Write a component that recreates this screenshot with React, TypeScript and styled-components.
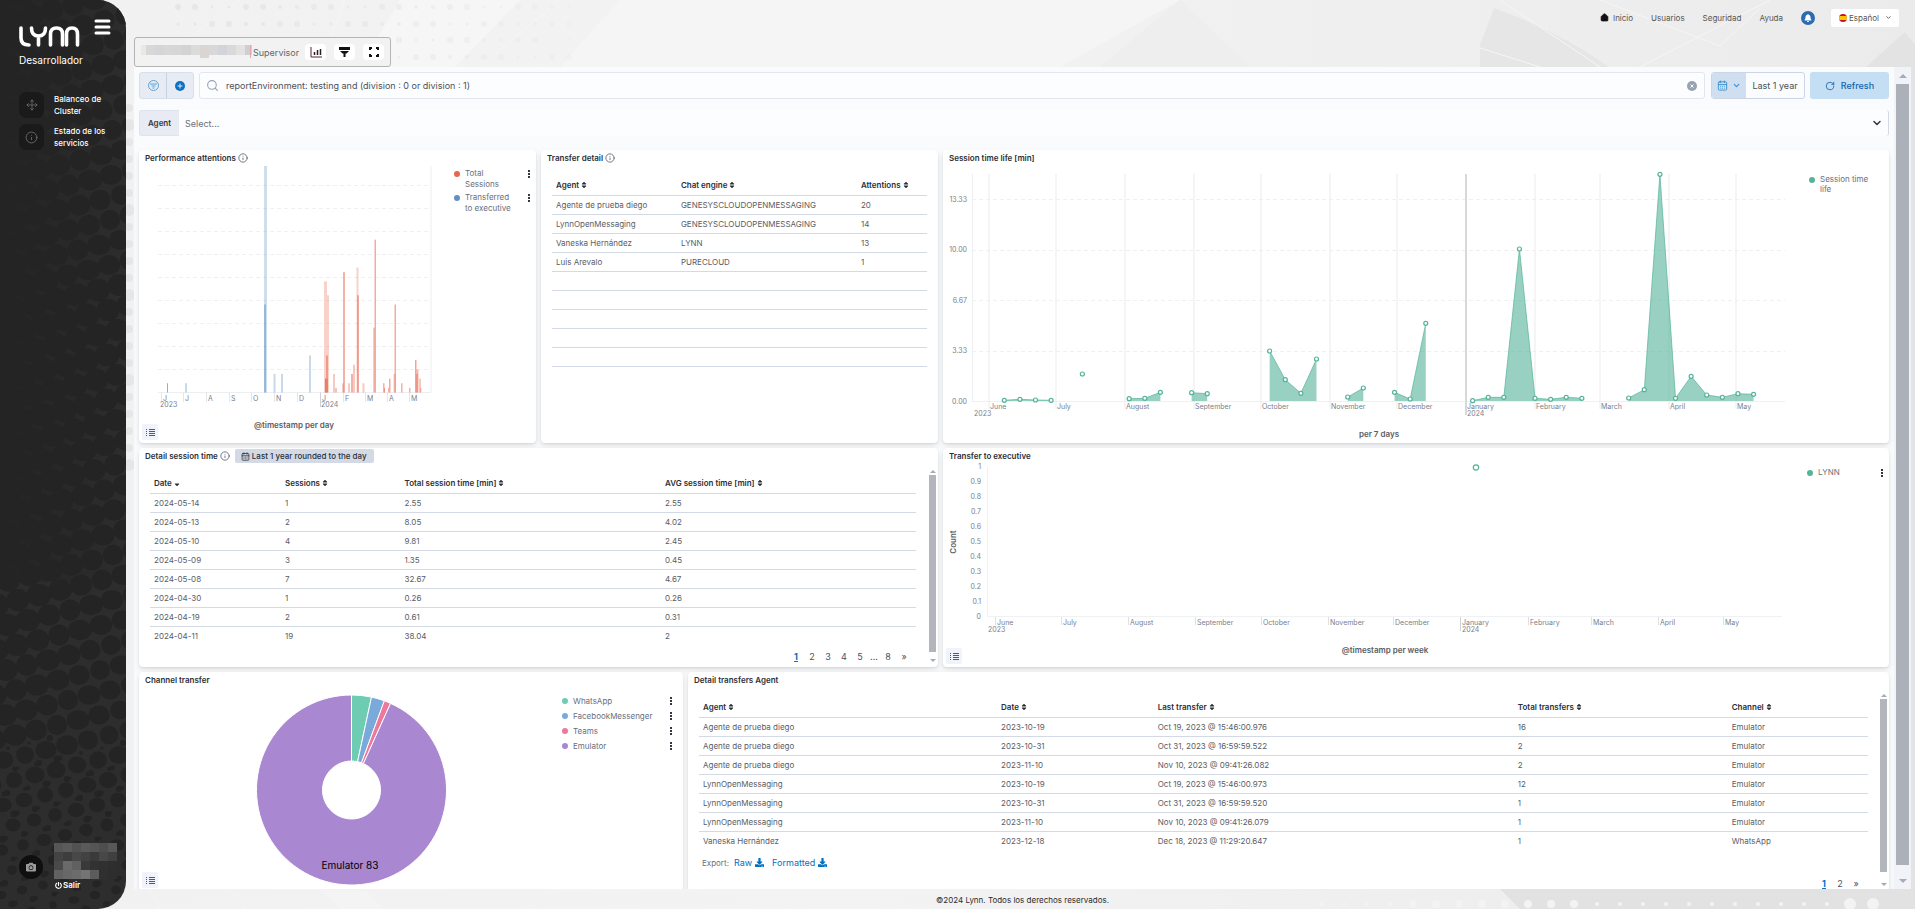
import React from "react";
import styled, { createGlobalStyle } from "styled-components";
import { Info, Move, ChevronDown, Search, RotateCw, CalendarDays, House } from "lucide-react";
import { FaSort, FaSortDown, FaDownload, FaCamera, FaPowerOff, FaBell } from "react-icons/fa";

const GlobalStyle = createGlobalStyle`
  * { box-sizing: border-box; }
  body { margin: 0; background: #efefef; font-family: Inter, "Liberation Sans", sans-serif; color: #343741; }
  button, input, select { font-family: inherit; color: inherit; margin: 0; padding: 0; border: 0; background: none; }
  button, select { cursor: pointer; }
  a { color: inherit; text-decoration: none; }
`;

/* ---------- page frame ---------- */

const Shell = styled.div`
  position: relative;
  display: flex;
  height: 100vh;
  overflow: hidden;
`;

const Backdrop = styled.svg`
  position: absolute;
  inset: 0;
  width: 100%;
  height: 100%;
`;

const Main = styled.div`
  position: relative;
  flex: 1;
  min-width: 0;
  display: flex;
  flex-direction: column;
  padding: 0 4px 0 8px;
`;

const Footer = styled.footer`
  height: 20px;
  line-height: 22px;
  text-align: center;
  font-size: 8px;
  color: #2b2b2b;
`;

/* ---------- sidebar ---------- */

const Sidebar = styled.aside`
  position: relative;
  flex: none;
  width: 126px;
  display: flex;
  flex-direction: column;
  overflow: hidden;
  background: #2d2d2d;
  border-radius: 0 28px 28px 0;
  color: #fff;
`;

const SidebarTop = styled.div`
  position: relative;
  display: flex;
  justify-content: space-between;
  padding: 18px 15px 0 19px;
`;

const LogoMark = styled.svg`
  margin-top: 7px;
`;

const MenuToggle = styled.button`
  display: flex;
  align-items: flex-start;
`;

const Role = styled.div`
  position: relative;
  padding: 5px 0 0 19px;
  font-size: 10px;
  line-height: 14px;
`;

const SideNav = styled.nav`
  position: relative;
  display: flex;
  flex-direction: column;
  gap: 6px;
  padding: 25px 6px 0 19px;
`;

const SideLink = styled.a`
  display: flex;
  align-items: center;
  gap: 10px;
  font-size: 8px;
  line-height: 12px;
  font-weight: 500;
`;

const SideIcon = styled.span`
  flex: none;
  width: 25px;
  height: 26px;
  display: grid;
  place-items: center;
  border-radius: 7px;
  background: #1a1a1a;
  color: #767676;
`;

const UserCard = styled.div`
  position: relative;
  display: flex;
  gap: 11px;
  margin-top: auto;
  padding: 0 8px 18px 19px;
`;

const Avatar = styled.button`
  flex: none;
  width: 24px;
  height: 24px;
  margin-top: 12px;
  display: grid;
  place-items: center;
  border-radius: 50%;
  background: #0f0f0f;
  color: #9a9a9a;
`;

const Logout = styled.a`
  display: flex;
  align-items: center;
  gap: 1px;
  padding-left: 1px;
  font-size: 8px;
  line-height: 12px;
  font-weight: 600;
`;

/* ---------- header ---------- */

const TopNav = styled.nav`
  display: flex;
  justify-content: flex-end;
  align-items: center;
  height: 37px;
  padding: 0 12px 2px 0;
  font-size: 8px;
  color: #555;
`;

const NavLink = styled.a`
  display: flex;
  align-items: center;
  gap: 4px;
  margin-right: 18px;
`;

const Bell = styled.button`
  width: 14px;
  height: 14px;
  margin-right: 16px;
  display: grid;
  place-items: center;
  border-radius: 50%;
  background: #2d6bb0;
  color: #fff;
`;

const Language = styled.label`
  display: flex;
  align-items: center;
  gap: 2px;
  height: 18px;
  padding: 0 7px 0 8px;
  border-radius: 2px;
  background: #fff;
`;

const LanguageSelect = styled.select`
  appearance: none;
  font-size: 8px;
  width: 34px;
`;

const RoleBar = styled.div`
  align-self: flex-start;
  display: flex;
  align-items: center;
  height: 30px;
  padding: 0 6px;
  border: 1px solid #b3b3b3;
  border-radius: 3px;
  background: #f2f2f2;
  font-size: 9px;
  color: #666;
`;

const RoleName = styled.span`
  margin: 0 6px 0 1px;
`;

const ToolGroup = styled.div`
  display: flex;
  gap: 8px;
`;

const ToolButton = styled.button`
  width: 21px;
  height: 16px;
  display: grid;
  place-items: center;
  border-radius: 4px;
  background: #fff;
`;

/* ---------- dashboard ---------- */

const Frame = styled.main`
  flex: 1;
  min-height: 0;
  display: flex;
  background: #fafbfd;
  overflow: hidden;
`;

const Dashboard = styled.div`
  flex: 1;
  min-width: 0;
  padding: 5px;
`;

const QueryBar = styled.form`
  display: flex;
  gap: 5px;
  height: 27px;
`;

const FilterGroup = styled.div`
  display: flex;
  border: 1px solid #d9dfea;
  border-radius: 3px;
  background: #e7ebf3;
  overflow: hidden;
`;

const FilterButton = styled.button`
  width: 26px;
  display: grid;
  place-items: center;
  & + & { width: 27px; border-left: 1px solid #c7d1e2; }
`;

const QueryBox = styled.label`
  flex: 1;
  display: flex;
  align-items: center;
  gap: 7px;
  padding: 0 6px;
  border: 1px solid #e3e6ef;
  border-radius: 3px;
  background: #fcfdfe;
  color: #98a2b3;
`;

const QueryInput = styled.input`
  flex: 1;
  min-width: 0;
  outline: none;
  font-size: 9px;
  color: #4c505a;
`;

const ClearButton = styled.button`
  width: 10px;
  height: 10px;
  margin-right: 1px;
  display: grid;
  place-items: center;
  border-radius: 50%;
  background: #98a2b3;
`;

const DateGroup = styled.div`
  display: flex;
  width: 94px;
  margin-left: 1px;
  border: 1px solid #ccd4e6;
  border-radius: 3px;
  overflow: hidden;
  background: #fbfcfd;
`;

const DateQuick = styled.button`
  width: 34px;
  display: flex;
  align-items: center;
  justify-content: center;
  gap: 4px;
  background: #cfdff0;
  color: #3b8fd0;
`;

const DateRange = styled.button`
  flex: 1;
  font-size: 9px;
  color: #4c505a;
`;

const RefreshButton = styled.button`
  width: 79px;
  display: flex;
  align-items: center;
  justify-content: center;
  gap: 6px;
  border-radius: 3px;
  background: #c4dff3;
  color: #1464ab;
  font-size: 9px;
  font-weight: 500;
`;

const AgentControl = styled.label`
  position: relative;
  display: flex;
  height: 26px;
  margin: 11px 0 14px;
  border-right: 1px solid #d3dae6;
  border-radius: 3px;
  background: #fcfdfe;
`;

const AgentLabel = styled.span`
  display: flex;
  align-items: center;
  width: 40px;
  justify-content: center;
  border: 1px solid #dfe3ed;
  border-right: 0;
  border-radius: 3px 0 0 3px;
  background: #e8ebf3;
  font-size: 8px;
  font-weight: 600;
`;

const AgentSelect = styled.select`
  flex: 1;
  appearance: none;
  outline: none;
  padding: 0 6px;
  font-size: 9px;
  color: #69707d;
`;

const SelectArrow = styled.span`
  position: absolute;
  right: 5px;
  top: 7px;
  line-height: 0;
  pointer-events: none;
`;

const PanelRow = styled.div<{ $columns: string; $height: number }>`
  display: grid;
  grid-template-columns: ${(p) => p.$columns};
  grid-template-rows: ${(p) => p.$height}px;
  gap: 5px;
  margin-bottom: 5px;
`;

const PanelBox = styled.section`
  position: relative;
  display: flex;
  flex-direction: column;
  min-width: 0;
  background: #fff;
  border-radius: 4px;
  box-shadow: 0 1px 2px rgba(0, 0, 0, 0.07), 0 2px 4px rgba(0, 0, 0, 0.05), 0 4px 10px rgba(0, 0, 0, 0.06);
`;

const PanelTitle = styled.h2`
  display: flex;
  align-items: center;
  gap: 2px;
  height: 16px;
  margin: 0;
  padding-left: 6px;
  font-size: 8px;
  font-weight: 600;
  color: #2c2f37;
`;

const TimeBadge = styled.span`
  display: flex;
  align-items: center;
  gap: 2px;
  height: 14px;
  margin-left: 3px;
  padding: 0 7px 0 6px;
  border-radius: 2px;
  background: #d3dae6;
  font-weight: 500;
`;

const PanelBody = styled.div`
  flex: 1;
  min-height: 0;
  display: flex;
`;

const ChartArea = styled.svg`
  flex: 1;
  min-width: 0;
  height: 100%;
  overflow: visible;
  font-size: 7px;
  fill: #7a808c;
`;

const Legend = styled.ul<{ $width: number; $top: number; $line: number; $right?: number }>`
  flex: none;
  width: ${(p) => p.$width}px;
  margin: 0;
  padding: ${(p) => p.$top}px ${(p) => p.$right ?? 6}px 0 0;
  list-style: none;
  display: flex;
  flex-direction: column;
  gap: 2px;
  font-size: 8px;
  line-height: ${(p) => p.$line}px;
  color: #69707d;
`;

const LegendItem = styled.li`
  display: flex;
  gap: 5px;
`;

const LegendDot = styled.span<{ $color: string }>`
  flex: none;
  width: 6px;
  height: 6px;
  margin-top: 3px;
  border-radius: 50%;
  background: ${(p) => p.$color};
`;

const LegendText = styled.span<{ $width: number }>`
  width: ${(p) => p.$width}px;
`;

const DotsButton = styled.button`
  align-self: flex-start;
  margin: 2px 0 0 auto;
  line-height: 0;
`;

const ListButton = styled.button`
  position: absolute;
  left: 3px;
  bottom: 3px;
  width: 16px;
  height: 16px;
  display: grid;
  place-items: center;
  border-radius: 2px;
  background: #f0f3fb;
`;

const TableArea = styled.div<{ $left: number; $right: number; $top: number }>`
  flex: 1;
  min-width: 0;
  display: flex;
  flex-direction: column;
  padding: ${(p) => p.$top}px ${(p) => p.$right}px 0 ${(p) => p.$left}px;
`;

const DataTable = styled.table`
  width: 100%;
  table-layout: fixed;
  border-collapse: collapse;
  font-size: 8px;
  line-height: 10px;
`;

const HeadCell = styled.th`
  height: 19px;
  padding: 0 4px;
  text-align: left;
  white-space: nowrap;
  border-bottom: 1px solid #d3dae6;
`;

const Cell = styled.td<{ $open?: boolean }>`
  height: 19px;
  padding: 0 4px;
  white-space: nowrap;
  color: #5a5d66;
  border-bottom: 1px solid ${(p) => (p.$open ? "transparent" : "#d3dae6")};
`;

const SortButton = styled.button`
  display: inline-flex;
  align-items: center;
  gap: 1px;
  font-size: 8px;
  font-weight: 600;
  color: #2c2f37;
`;

const Pager = styled.nav<{ $top: number }>`
  flex: none;
  display: flex;
  justify-content: flex-end;
  align-items: center;
  height: 21px;
  margin-top: ${(p) => p.$top}px;
  padding-right: 4px;
  font-size: 9px;
  color: #4c505a;
`;

const PageButton = styled.button<{ $current?: boolean }>`
  width: 16px;
  font-size: 9px;
  text-align: center;
  ${(p) => p.$current && "color: #0071c2; font-weight: 700; text-decoration: underline;"}
`;

const PageGap = styled.span`
  width: 12px;
  text-align: center;
`;

const ExportRow = styled.div`
  flex: none;
  display: flex;
  align-items: center;
  gap: 5px;
  height: 18px;
  margin-top: 3px;
  padding-left: 3px;
  font-size: 8px;
  color: #69707d;
`;

const ExportLink = styled.a`
  display: flex;
  align-items: center;
  gap: 3px;
  margin-right: 3px;
  font-size: 9px;
  color: #0071c2;
`;

const Scroller = styled.div<{ $width: number; $margin: string }>`
  flex: none;
  width: ${(p) => p.$width}px;
  margin: ${(p) => p.$margin};
  display: flex;
  flex-direction: column;
  align-items: center;
`;

const PageTrack = styled(Scroller)`
  background: #f2f3f8;
`;

const Thumb = styled.div<{ $color: string; $bottom: number; $inset: number }>`
  flex: 1;
  align-self: stretch;
  margin: 0 ${(p) => p.$inset}px ${(p) => p.$bottom}px;
  background: ${(p) => p.$color};
`;

const Arrow = styled.span<{ $up?: boolean; $size: number; $box: number }>`
  height: ${(p) => p.$box}px;
  display: flex;
  align-items: center;
  &::before {
    content: "";
    border: ${(p) => p.$size}px solid transparent;
    border-${(p) => (p.$up ? "bottom" : "top")}-color: #a6abb5;
    border-${(p) => (p.$up ? "top" : "bottom")}-width: 0;
  }
`;

/* ---------- decorative drawings ---------- */

function SidebarTexture() {
  const dots: React.ReactNode[] = [];
  for (let i = -6; i < 14; i++) {
    for (let j = -2; j < 52; j++) {
      const x = i * 21 + j * 10 - Math.floor(j / 2) * 21;
      const y = -i * 5 + j * 20 + Math.floor(j / 2) * 5;
      if (x < -16 || x > 140 || y < -16 || y > 925) continue;
      const wobble = (Math.abs(i * 7 + j * 3) % 4) * 0.5;
      if (y < 750) {
        const r = y < 280 ? 11.4 - (x / 126) * 1.6 : 12.6 - (x / 126) * 1.6 - (Math.max(0, y - 380) / 370) * 2;
        dots.push(<ellipse key={`${i}/${j}`} cx={x} cy={y} rx={r + wobble} ry={r} />);
      } else {
        const r = 9 - ((y - 750) / 160) * 5.5;
        dots.push(<ellipse key={`${i}/${j}`} cx={x} cy={y} rx={r + wobble} ry={r} />);
        dots.push(<circle key={`${i}-${j}`} cx={x + 11} cy={y + 9} r={2 + wobble} />);
        dots.push(<circle key={`${i}_${j}`} cx={x + 4} cy={y - 12} r={1.5 + wobble} />);
      }
    }
  }
  return (
    <Backdrop aria-hidden="true">
      <defs>
        <linearGradient id="shade" x1="0" x2="1">
          <stop offset="0" stopColor="#242424" stopOpacity="1" />
          <stop offset="1" stopColor="#242424" stopOpacity="0" />
        </linearGradient>
      </defs>
      <g fill="#242424">{dots}</g>
      <rect width="100%" height="64%" fill="url(#shade)" />
    </Backdrop>
  );
}

function PageTexture() {
  const dots: React.ReactNode[] = [];
  const sizes = [3, 3, 1.5, 1.5, 3, 3, 2, 2];
  for (let k = 0; k < 24; k++) {
    const x = 178 + k * 17;
    [7, 24, 40, 57].forEach((y, r) => {
      if (r > 1 && x < 394) return;
      dots.push(<circle key={`${k}-${r}`} cx={x} cy={y} r={sizes[(k + r * 2) % 8]} opacity={1 - k / 30} />);
    });
  }
  for (let k = 0; k < 22; k++) dots.push(<circle key={`l${k}`} cx="129" cy={108 + k * 17} r={k % 5 === 1 ? 6 : 4} />);
  return (
    <Backdrop aria-hidden="true" viewBox="0 0 1915 909" preserveAspectRatio="xMidYMid slice">
      <defs>
        <linearGradient id="page" x1="0" x2="1">
          <stop offset="0" stopColor="#f1f1f1" />
          <stop offset="0.45" stopColor="#f3f3f3" />
          <stop offset="1" stopColor="#ebebeb" />
        </linearGradient>
      </defs>
      <rect width="1915" height="909" fill="url(#page)" />
      <path d="M400 0H520L455 67H360Z" fill="#f6f6f6" />
      <path d="M620 0H1180L1060 67H560Z" fill="#f5f5f5" />
      <path d="M1180 0L1250 67H1100Z" fill="#eeeeee" />
      <path d="M1494 8Q1560 32 1609 67H1480V45Z" fill="#e6e6e6" />
      <path d="M1866 67L1905 32L1915 45V909H1905V67Z" fill="#e3e3e3" />
      <g stroke="#f5f5f5" fill="none">
        <path d="M240 0L150 67M345 0L320 67M560 0L480 67M1500 0L1600 67M1600 0L1720 46L1760 8M1640 67L1770 0M1480 48L1540 67" />
        <path d="M150 890L160 909M230 890L245 909M525 909L550 890H700M745 890L760 909M1690 890L1716 909L1740 890M1752 909L1772 890" />
      </g>
      <path d="M320 890H365L385 909H340Z" fill="#f4f4f4" />
      <path d="M1500 889H1915V909H1520Z" fill="#e2e2e2" />
      <g fill="#e6e6e6">{dots}</g>
      <g fill="#f3f3f3">
        {Array.from({ length: 25 }, (_, k) => (
          <circle key={k} cx={1321 + k * 23} cy="904" r={k === 23 || k === 24 ? 6 : k > 3 && k < 12 ? 4 : 2} />
        ))}
      </g>
    </Backdrop>
  );
}

const maskTones = ["#ece8df", "#d8d8d8", "#d5d5d6", "#d7d7d7", "#d6d6d6", "#d3d3d3", "#dbdbdb", "#dad5d2", "#d7d8da", "#d2d4d9", "#d9d9d9", "#e2e2e2", "#cfcfd1"];

function MaskedName() {
  return (
    <svg width="111" height="14" aria-hidden="true">
      {maskTones.map((c, i) => (
        <rect key={i} x={i * 9 - 4} y="0" width="9" height="9" fill={c} />
      ))}
      {maskTones.map((c, i) => (
        <rect key={`b${i}`} x={i * 9 - 4} y="9" width="9" height={i === 7 ? 4 : 1} fill={c} />
      ))}
      <rect x="109" width="1" height="13" fill="#e3a9ae" />
    </svg>
  );
}

const userTones = [
  ["#565656", "#5b5b5b", "#525252", "#5a5a5a", "#555", "#4e4e4e", "#585858"],
  ["#444", "#3d3d3d", "#484848", "#424242", "#3a3a3a", "#474747", "#404040"],
  ["#4a4a4a", "#6a6a6a", "#606060", "#393939", "#323232", "#303030", "#2e2e2e"],
  ["#626262", "#686868", "#6c6c6c", "#747474", "#5c5c5c", "#2f2f2f", "#2d2d2d"],
];

function MaskedUser() {
  return (
    <svg width="64" height="36" display="block" aria-hidden="true">
      {userTones.map((row, y) => row.map((c, x) => <rect key={`${x}-${y}`} x={x * 9} y={y * 9} width="9" height="9" fill={c} />))}
    </svg>
  );
}

function InfoIcon() {
  return <Info size={10} strokeWidth={2} color="#5a606b" aria-hidden="true" />;
}

function Dots() {
  return (
    <svg width="2" height="8" fill="#343741" aria-hidden="true">
      <path d="M0 0h2v2H0zM0 3h2v2H0zM0 6h2v2H0z" />
    </svg>
  );
}

function ListIcon() {
  return (
    <svg width="9" height="7" stroke="#535966" strokeWidth="1" aria-hidden="true">
      <path d="M0 .5h1M0 2.5h1M0 4.5h1M0 6.5h1M3 .5h6M3 2.5h6M3 4.5h6M3 6.5h6" />
    </svg>
  );
}

/* ---------- charts ---------- */

const GRID = "#eef0f4";
const LINE = "#e4e6ea";

const perfMonths: [number, string][] = [
  [22, "J"], [44, "J"], [67, "A"], [90, "S"], [112, "O"], [135, "N"], [158, "D"],
  [181, "J"], [204, "F"], [226, "M"], [248, "A"], [270, "M"],
];

/* x, count, bar width, opacity */
const transferred: [number, number, number, number][] = [
  [28, 2, 1, 0.7], [46, 2, 2, 0.35], [125, 49, 3, 0.3], [125, 19, 2, 0.5], [134.5, 4, 2, 0.35], [142, 4, 2, 0.35], [170, 8, 2, 0.35], [186, 3, 1, 0.6],
];

const sessions: [number, number, number, number][] = [
  [185, 24, 3, 0.3], [188, 21, 2, 0.3], [187, 8, 2, 0.5], [186, 3, 3, 0.5], [194, 4, 2, 0.35], [196, 1, 2, 0.4],
  [203, 2, 2, 0.35], [204, 26, 2, 0.5], [209, 2, 2, 0.35], [212, 4, 2, 0.5], [214, 6, 2, 0.35], [217.5, 27, 2, 0.3], [218, 21, 2, 0.5],
  [223.5, 2, 2, 0.35], [234, 14, 2, 0.35], [235.5, 33, 1.5, 0.55], [244, 2, 1.5, 0.5], [245, 1, 1, 0.6], [249, 1, 1, 0.5], [250, 3, 1.5, 0.55],
  [254.5, 4, 2, 0.35], [255.5, 19, 1.5, 0.55], [262, 2, 1.5, 0.5], [270, 1, 1.5, 0.5], [276, 7, 1.5, 0.6], [277.5, 5, 2, 0.45], [277, 4, 2, 0.4], [280, 3, 2, 0.35], [281, 1, 1.5, 0.35],
];

function PerformanceChart() {
  const base = 226.5;
  const bar = ([x, v, w, o]: [number, number, number, number], i: number) => {
    const h = Math.min(v * 4.63, base);
    return <rect key={i} x={x} y={base - h} width={w} height={h} opacity={o} />;
  };
  return (
    <ChartArea viewBox="0 0 313 277" preserveAspectRatio="xMinYMin meet" role="img" aria-label="Performance attentions per day">
      {Array.from({ length: 9 }, (_, k) => (
        <path key={k} d={`M19 ${Math.round(base - (k + 1) * 23.1) + 0.5}H292`} stroke={GRID} strokeDasharray="4 3" />
      ))}
      <path d={`M19 ${base}H292V0`} stroke="#eceef1" fill="none" />
      {perfMonths.map(([x, m], i) => (
        <g key={i}>
          <path d={`M${x + 0.5} ${base}V${i === 7 ? 241 : 236}`} stroke={i === 7 ? "#cfd2d8" : LINE} />
          <text x={x + 2} y="235">{m}</text>
        </g>
      ))}
      <text x="21" y="241">2023</text>
      <text x="182" y="241">2024</text>
      <g fill="#6092c0">{transferred.map(bar)}</g>
      <g fill="#e7664c">{sessions.map(bar)}</g>
      <text x="155" y="262" textAnchor="middle" fontSize="8" fontWeight="600" fill="#5a5d66">@timestamp per day</text>
    </ChartArea>
  );
}

const lifeMonths: [number, string][] = [
  [46, "June"], [113, "July"], [182, "August"], [251, "September"], [318, "October"], [387, "November"],
  [454, "December"], [523, "January"], [592, "February"], [657, "March"], [726, "April"], [793, "May"],
];

/* week index of the first point, then the height of each point above the axis */
const lifeRuns: [number, number[]][] = [
  [0, [0.7, 1.7, 1, 0.7]],
  [5, [27]],
  [8, [2.3, 2.7, 8.7]],
  [12, [8.3, 7.3]],
  [17, [50, 21.3, 7.7, 42]],
  [22, [4, 13]],
  [25, [8.7, 2, 77.7]],
  [30, [0.3, 3.7, 3.7, 152, 2.7, 1.7, 3.7, 2.7]],
  [40, [3, 11.3, 226.7, 2.7, 24.7, 6, 3.7, 7.3, 6.7]],
];

function SessionLifeChart() {
  const base = 235;
  const px = (i: number) => 61.3 + i * 15.61;
  return (
    <ChartArea viewBox="0 0 856 277" preserveAspectRatio="xMinYMin meet" role="img" aria-label="Session time life per 7 days">
      {["0.00", "3.33", "6.67", "10.00", "13.33"].map((t, k) => (
        <g key={t}>
          <path d={`M29 ${Math.round(base - k * 50.4) + 0.5}H842`} stroke={GRID} strokeDasharray={k ? "4 3" : undefined} />
          <text x="24" y={base - k * 50.4 + 2.5} textAnchor="end">{t}</text>
        </g>
      ))}
      <path d={`M29.5 8V${base}`} stroke="#eceef1" />
      {lifeMonths.map(([x, m], i) => (
        <g key={m}>
          <path d={`M${x} 8V${i === 7 ? 249 : 243}`} stroke={i === 7 ? "#d8d8da" : "#ebebed"} strokeWidth={i === 7 ? 2 : 1} />
          <text x={x + 1} y="243">{m}</text>
        </g>
      ))}
      <text x="31" y="250">2023</text>
      <text x="524" y="250">2024</text>
      {lifeRuns.map(([start, hs]) => {
        const pts = hs.map((h, i) => `${px(start + i)},${base - h}`);
        return (
          <g key={start}>
            <polygon points={`${px(start)},${base} ${pts.join(" ")} ${px(start + hs.length - 1)},${base}`} fill="#54b399" opacity="0.6" />
            <polyline points={pts.join(" ")} fill="none" stroke="#54b399" opacity="0.7" />
            {hs.map((h, i) => (
              <circle key={i} cx={px(start + i)} cy={base - h} r="2" fill="#fff" stroke="#54b399" strokeWidth="1.2" />
            ))}
          </g>
        );
      })}
      <text x="436" y="271" textAnchor="middle" fontSize="8" fontWeight="600" fill="#5a5d66">per 7 days</text>
    </ChartArea>
  );
}

const execMonths: [number, string][] = [
  [52, "June"], [118, "July"], [185, "August"], [252, "September"], [318, "October"], [385, "November"],
  [450, "December"], [517, "January"], [585, "February"], [648, "March"], [715, "April"], [780, "May"],
];

function ExecutiveChart() {
  return (
    <ChartArea viewBox="0 0 856 203" preserveAspectRatio="xMinYMin meet" role="img" aria-label="Transfer to executive per week">
      {["0", "0.1", "0.2", "0.3", "0.4", "0.5", "0.6", "0.7", "0.8", "0.9", "1"].map((t, k) => (
        <text key={t} x="38" y={154.5 - k * 14.97} textAnchor="end">{t}</text>
      ))}
      <path d="M44.5 3V152.5H839" stroke="#f0f1f4" fill="none" />
      {execMonths.map(([x, m], i) => (
        <g key={m}>
          <path d={`M${x + 0.5} 153V${i === 7 ? 167 : 161}`} stroke={i === 7 ? "#cfd2d8" : "#dfe1e6"} />
          <text x={x + 2} y="161">{m}</text>
        </g>
      ))}
      <text x="45" y="168">2023</text>
      <text x="519" y="168">2024</text>
      <text transform="translate(13 78) rotate(-90)" textAnchor="middle" fontSize="8" fontWeight="600" fill="#5a5d66">Count</text>
      <circle cx="533" cy="3.5" r="2.7" fill="#fff" stroke="#54b399" strokeWidth="1.2" />
      <text x="442" y="189" textAnchor="middle" fontSize="8" fontWeight="600" fill="#5a5d66">@timestamp per week</text>
    </ChartArea>
  );
}

const channels: [string, number, string][] = [
  ["WhatsApp", 3, "#6dccb1"],
  ["FacebookMessenger", 2, "#79aad9"],
  ["Teams", 1, "#ee789d"],
  ["Emulator", 83, "#a987d1"],
];

function ChannelChart() {
  const total = channels.reduce((s, c) => s + c[1], 0);
  const at = (r: number, a: number) => `${212.5 + r * Math.sin(a)} ${102 - r * Math.cos(a)}`;
  let from = 0;
  return (
    <ChartArea viewBox="0 0 423 203" preserveAspectRatio="xMinYMin meet" role="img" aria-label="Channel transfer">
      {channels.map(([name, n, color]) => {
        const a = from;
        const b = from + (n / total) * Math.PI * 2;
        from = b;
        const big = b - a > Math.PI ? 1 : 0;
        return (
          <path
            key={name}
            d={`M${at(95, a)}A95 95 0 ${big} 1 ${at(95, b)}L${at(29, b)}A29 29 0 ${big} 0 ${at(29, a)}Z`}
            fill={color}
            stroke="#fff"
          />
        );
      })}
      <text x="211" y="181" textAnchor="middle" fontSize="10" fill="#000">Emulator 83</text>
    </ChartArea>
  );
}

/* ---------- tables ---------- */

type TableProps = { columns: [string, string][]; rows: string[][]; blanks?: number; sorted?: number; openEnd?: boolean };

function Grid({ columns, rows, blanks = 0, sorted, openEnd }: TableProps) {
  const all = rows.concat(Array.from({ length: blanks }, () => columns.map(() => "")));
  return (
    <DataTable>
      <colgroup>{columns.map(([name, width]) => <col key={name} width={width} />)}</colgroup>
      <thead>
        <tr>
          {columns.map(([name], i) => (
            <HeadCell key={name} scope="col">
              <SortButton type="button">
                {name}
                {i === sorted ? <FaSortDown size={8} aria-hidden="true" /> : <FaSort size={8} aria-hidden="true" />}
              </SortButton>
            </HeadCell>
          ))}
        </tr>
      </thead>
      <tbody>
        {all.map((row, i) => (
          <tr key={i}>
            {row.map((cell, j) => <Cell key={j} $open={openEnd && i === all.length - 1}>{cell}</Cell>)}
          </tr>
        ))}
      </tbody>
    </DataTable>
  );
}

const detailRows = [
  ["Agente de prueba diego", "GENESYSCLOUDOPENMESSAGING", "20"],
  ["LynnOpenMessaging", "GENESYSCLOUDOPENMESSAGING", "14"],
  ["Vaneska Hernández", "LYNN", "13"],
  ["Luis Arevalo", "PURECLOUD", "1"],
];

const timeRows = [
  ["2024-05-14", "1", "2.55", "2.55"],
  ["2024-05-13", "2", "8.05", "4.02"],
  ["2024-05-10", "4", "9.81", "2.45"],
  ["2024-05-09", "3", "1.35", "0.45"],
  ["2024-05-08", "7", "32.67", "4.67"],
  ["2024-04-30", "1", "0.26", "0.26"],
  ["2024-04-19", "2", "0.61", "0.31"],
  ["2024-04-11", "19", "38.04", "2"],
];

const agentRows = [
  ["Agente de prueba diego", "2023-10-19", "Oct 19, 2023 @ 15:46:00.976", "16", "Emulator"],
  ["Agente de prueba diego", "2023-10-31", "Oct 31, 2023 @ 16:59:59.522", "2", "Emulator"],
  ["Agente de prueba diego", "2023-11-10", "Nov 10, 2023 @ 09:41:26.082", "2", "Emulator"],
  ["LynnOpenMessaging", "2023-10-19", "Oct 19, 2023 @ 15:46:00.973", "12", "Emulator"],
  ["LynnOpenMessaging", "2023-10-31", "Oct 31, 2023 @ 16:59:59.520", "1", "Emulator"],
  ["LynnOpenMessaging", "2023-11-10", "Nov 10, 2023 @ 09:41:26.079", "1", "Emulator"],
  ["Vaneska Hernández", "2023-12-18", "Dec 18, 2023 @ 11:29:20.647", "1", "WhatsApp"],
];

function Pages({ items, top }: { items: string[]; top: number }) {
  return (
    <Pager aria-label="Pages" $top={top}>
      {items.map((p) =>
        p === "..." ? <PageGap key={p}>...</PageGap> : <PageButton key={p} type="button" $current={p === "1"}>{p}</PageButton>
      )}
    </Pager>
  );
}

function OptionsButton() {
  return <DotsButton type="button" aria-label="Options"><Dots /></DotsButton>;
}

/* ---------- page ---------- */

export default function App() {
  return (
    <>
      <GlobalStyle />
      <Shell>
        <PageTexture />
        <Sidebar>
          <SidebarTexture />
          <SidebarTop>
            <LogoMark width="61" height="23" viewBox="0 0 61 23" fill="none" stroke="#fff" strokeWidth="3.6" strokeLinecap="round" role="img" aria-label="Lynn">
              <path d="M2 3V13Q2 20 10 20" />
              <path d="M12.5 3Q12.5 11 19.5 11Q26.5 11 26.5 3M19.5 11V20" />
              <path d="M31.5 20V9Q31.5 3 37.5 3Q43.5 3 43.5 9V20" />
              <path d="M47.5 20V9Q47.5 3 53 3Q58.5 3 58.5 9V20" />
            </LogoMark>
            <MenuToggle type="button" aria-label="Menú">
              <svg width="17" height="17" stroke="#fff" strokeWidth="3" strokeLinecap="round" aria-hidden="true">
                <path d="M2 3h13M2 9h13M2 15h13" />
              </svg>
            </MenuToggle>
          </SidebarTop>
          <Role>Desarrollador</Role>
          <SideNav>
            <SideLink href="#balanceo">
              <SideIcon><Move size={12} strokeWidth={1.5} aria-hidden="true" /></SideIcon>
              Balanceo de Cluster
            </SideLink>
            <SideLink href="#estado">
              <SideIcon><Info size={13} strokeWidth={1.5} aria-hidden="true" /></SideIcon>
              Estado de los servicios
            </SideLink>
          </SideNav>
          <UserCard>
            <Avatar type="button" aria-label="Foto"><FaCamera size={10} /></Avatar>
            <div>
              <MaskedUser />
              <Logout href="#salir"><FaPowerOff size={7} aria-hidden="true" />Salir</Logout>
            </div>
          </UserCard>
        </Sidebar>

        <Main>
          <TopNav>
            <NavLink href="#inicio"><House size={9} fill="#111" color="#111" aria-hidden="true" />Inicio</NavLink>
            <NavLink href="#usuarios">Usuarios</NavLink>
            <NavLink href="#seguridad">Seguridad</NavLink>
            <NavLink href="#ayuda">Ayuda</NavLink>
            <Bell type="button" aria-label="Notificaciones"><FaBell size={8} /></Bell>
            <Language>
              <svg width="8" height="8" viewBox="0 0 8 8" aria-hidden="true">
                <clipPath id="flag"><circle cx="4" cy="4" r="4" /></clipPath>
                <g clipPath="url(#flag)">
                  <rect width="8" height="8" fill="#c8102e" />
                  <rect y="2" width="8" height="4" fill="#ffc400" />
                </g>
              </svg>
              <LanguageSelect aria-label="Idioma" defaultValue="es">
                <option value="es">Español</option>
              </LanguageSelect>
              <ChevronDown size={7} strokeWidth={3} aria-hidden="true" />
            </Language>
          </TopNav>

          <RoleBar>
            <MaskedName />
            <RoleName>Supervisor</RoleName>
            <ToolGroup>
              <ToolButton type="button" aria-label="Gráficos">
                <svg width="12" height="11" fill="none" stroke="#222" aria-hidden="true">
                  <path d="M1 0V10H12" stroke="#5b1f3a" />
                  <path d="M4.5 8V5M7.5 8V3M10.5 8V2" strokeWidth="1.5" />
                </svg>
              </ToolButton>
              <ToolButton type="button" aria-label="Estilo">
                <svg width="11" height="10" fill="#111" aria-hidden="true">
                  <path d="M0 0H11V3H0ZM1 4H10L7.5 6.5H6.5V10H4.5V6.5H3.5Z" />
                </svg>
              </ToolButton>
              <ToolButton type="button" aria-label="Pantalla completa">
                <svg width="10" height="10" fill="none" stroke="#111" strokeWidth="2" aria-hidden="true">
                  <path d="M1 3V1H3M7 1H9V3M9 7V9H7M3 9H1V7" />
                </svg>
              </ToolButton>
            </ToolGroup>
          </RoleBar>

          <Frame>
            <Dashboard>
              <QueryBar>
                <FilterGroup>
                  <FilterButton type="button" aria-label="Saved queries">
                    <svg width="11" height="11" viewBox="0 0 11 11" fill="none" stroke="#5ba3d9" aria-hidden="true">
                      <circle cx="5.5" cy="5.5" r="5" />
                      <path d="M2 4h7M3.5 6h4M4.5 8h2" />
                    </svg>
                  </FilterButton>
                  <FilterButton type="button" aria-label="Add filter">
                    <svg width="10" height="10" aria-hidden="true">
                      <circle cx="5" cy="5" r="5" fill="#0b6fc2" />
                      <path d="M5 2.5V7.5M2.5 5H7.5" stroke="#dbe9f5" />
                    </svg>
                  </FilterButton>
                </FilterGroup>
                <QueryBox>
                  <Search size={13} strokeWidth={2} aria-hidden="true" />
                  <QueryInput aria-label="Query" defaultValue="reportEnvironment: testing and (division : 0 or division : 1)" />
                  <ClearButton type="button" aria-label="Clear query">
                    <svg width="4" height="4" stroke="#fff" aria-hidden="true"><path d="M.5 .5L3.5 3.5M3.5 .5L.5 3.5" /></svg>
                  </ClearButton>
                </QueryBox>
                <DateGroup>
                  <DateQuick type="button" aria-label="Quick select">
                    <CalendarDays size={11} aria-hidden="true" />
                    <ChevronDown size={9} strokeWidth={3} aria-hidden="true" />
                  </DateQuick>
                  <DateRange type="button">Last 1 year</DateRange>
                </DateGroup>
                <RefreshButton type="button"><RotateCw size={10} aria-hidden="true" />Refresh</RefreshButton>
              </QueryBar>

              <AgentControl>
                <AgentLabel>Agent</AgentLabel>
                <AgentSelect defaultValue="">
                  <option value="">Select...</option>
                </AgentSelect>
                <SelectArrow><ChevronDown size={12} strokeWidth={3} aria-hidden="true" /></SelectArrow>
              </AgentControl>

              <PanelRow $columns="397fr 397fr 946fr" $height={293}>
                <PanelBox>
                  <PanelTitle>Performance attentions<InfoIcon /></PanelTitle>
                  <PanelBody>
                    <PerformanceChart />
                    <Legend $width={82} $top={2} $line={11}>
                      <LegendItem><LegendDot $color="#e7664c" /><LegendText $width={46}>Total Sessions</LegendText><OptionsButton /></LegendItem>
                      <LegendItem><LegendDot $color="#6092c0" /><LegendText $width={50}>Transferred to executive</LegendText><OptionsButton /></LegendItem>
                    </Legend>
                  </PanelBody>
                  <ListButton type="button" aria-label="Toggle legend"><ListIcon /></ListButton>
                </PanelBox>
                <PanelBox>
                  <PanelTitle>Transfer detail<InfoIcon /></PanelTitle>
                  <PanelBody>
                    <TableArea $left={11} $right={11} $top={10}>
                      <Grid columns={[["Agent", "33.3%"], ["Chat engine", "48%"], ["Attentions", "18.7%"]]} rows={detailRows} blanks={5} />
                    </TableArea>
                  </PanelBody>
                </PanelBox>
                <PanelBox>
                  <PanelTitle>Session time life [min]</PanelTitle>
                  <PanelBody>
                    <SessionLifeChart />
                    <Legend $width={80} $top={8} $line={10}>
                      <LegendItem><LegendDot $color="#54b399" /><LegendText $width={50}>Session time life</LegendText></LegendItem>
                    </Legend>
                  </PanelBody>
                </PanelBox>
              </PanelRow>

              <PanelRow $columns="799fr 946fr" $height={219}>
                <PanelBox>
                  <PanelTitle>
                    Detail session time<InfoIcon />
                    <TimeBadge><CalendarDays size={9} aria-hidden="true" />Last 1 year rounded to the day</TimeBadge>
                  </PanelTitle>
                  <PanelBody>
                    <TableArea $left={11} $right={13} $top={10}>
                      <Grid
                        columns={[["Date", "17.1%"], ["Sessions", "15.6%"], ["Total session time [min]", "34%"], ["AVG session time [min]", "33.3%"]]}
                        rows={timeRows}
                        sorted={0}
                        openEnd
                      />
                      <Pages items={["1", "2", "3", "4", "5", "...", "8", "»"]} top={0} />
                    </TableArea>
                    <Scroller $width={7} $margin="3px 2px 3px 0">
                      <Arrow $up $size={3} $box={8} />
                      <Thumb $color="#b3b5bd" $bottom={4} $inset={0} />
                      <Arrow $size={3} $box={8} />
                    </Scroller>
                  </PanelBody>
                </PanelBox>
                <PanelBox>
                  <PanelTitle>Transfer to executive</PanelTitle>
                  <PanelBody>
                    <ExecutiveChart />
                    <Legend $width={82} $top={3} $line={11}>
                      <LegendItem><LegendDot $color="#54b399" /><LegendText $width={40}>LYNN</LegendText><OptionsButton /></LegendItem>
                    </Legend>
                  </PanelBody>
                  <ListButton type="button" aria-label="Toggle legend"><ListIcon /></ListButton>
                </PanelBox>
              </PanelRow>

              <PanelRow $columns="544fr 1201fr" $height={219}>
                <PanelBox>
                  <PanelTitle>Channel transfer</PanelTitle>
                  <PanelBody>
                    <ChannelChart />
                    <Legend $width={121} $top={7} $line={13} $right={11}>
                      {channels.map(([name, , color]) => (
                        <LegendItem key={name}><LegendDot $color={color} /><LegendText $width={82}>{name}</LegendText><OptionsButton /></LegendItem>
                      ))}
                    </Legend>
                  </PanelBody>
                  <ListButton type="button" aria-label="Toggle legend"><ListIcon /></ListButton>
                </PanelBox>
                <PanelBox>
                  <PanelTitle>Detail transfers Agent</PanelTitle>
                  <PanelBody>
                    <TableArea $left={11} $right={12} $top={10}>
                      <Grid
                        columns={[["Agent", "25.5%"], ["Date", "13.4%"], ["Last transfer", "30.8%"], ["Total transfers", "18.3%"], ["Channel", "12%"]]}
                        rows={agentRows}
                        openEnd
                      />
                      <ExportRow>
                        Export:
                        <ExportLink href="#raw">Raw<FaDownload size={9} aria-hidden="true" /></ExportLink>
                        <ExportLink href="#formatted">Formatted<FaDownload size={9} aria-hidden="true" /></ExportLink>
                      </ExportRow>
                      <Pages items={["1", "2", "»"]} top={1} />
                    </TableArea>
                    <Scroller $width={7} $margin="3px 2px 3px 0">
                      <Arrow $up $size={3} $box={8} />
                      <Thumb $color="#b3b5bd" $bottom={8} $inset={0} />
                      <Arrow $size={3} $box={8} />
                    </Scroller>
                  </PanelBody>
                </PanelBox>
              </PanelRow>
            </Dashboard>
            <PageTrack $width={17} $margin="0">
              <Arrow $up $size={4} $box={17} />
              <Thumb $color="#abb0b9" $bottom={7} $inset={2} />
              <Arrow $size={4} $box={17} />
            </PageTrack>
          </Frame>
          <Footer>©2024 Lynn. Todos los derechos reservados.</Footer>
        </Main>
      </Shell>
    </>
  );
}
